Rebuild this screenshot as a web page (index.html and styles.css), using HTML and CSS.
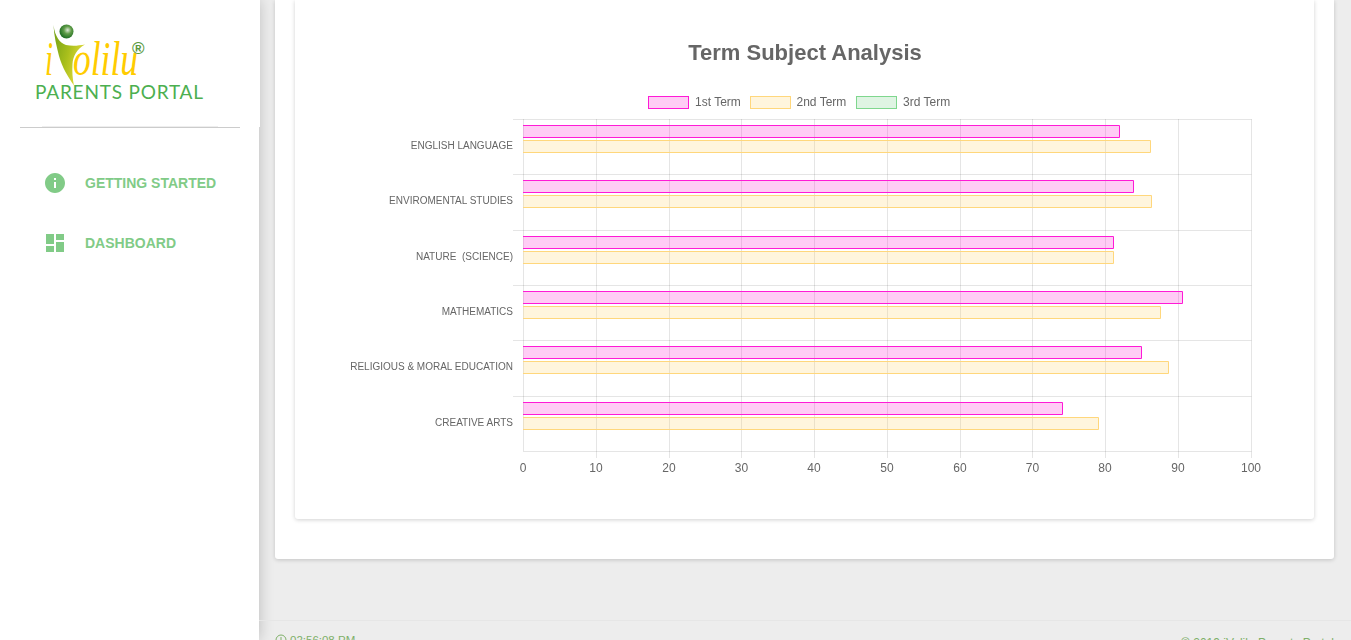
FILE: index.html
```html
<!DOCTYPE html>
<html>
<head>
<meta charset="utf-8">
<title>Parents Portal</title>
<link rel="stylesheet" href="styles.css">
</head>
<body>

<div class="sidebar">
	<div class="logo">
		<svg class="logo-art" viewBox="0 0 260 127" width="260" height="127">
			<defs>
				<radialGradient id="ball" cx="0.58" cy="0.4" r="0.6">
					<stop offset="0" stop-color="#dfe9d8"/>
					<stop offset="0.45" stop-color="#5f9c48"/>
					<stop offset="1" stop-color="#1f6d23"/>
				</radialGradient>
				<linearGradient id="figure" x1="0" y1="0" x2="1" y2="0.5">
					<stop offset="0" stop-color="#6f9e16"/>
					<stop offset="0.55" stop-color="#a9bf1c"/>
					<stop offset="1" stop-color="#e4dc3a"/>
				</linearGradient>
			</defs>
			<circle cx="66.5" cy="31.5" r="7" fill="url(#ball)"/>
			<path d="M53.5 25C55 37 60 43 66 45C73 46.500 79 45.500 85 44.500C77 49 73 56 72.500 64C72 71 72.500 79 74 85.500C68 77 62 67 59 56C56.500 46 54 36 53.500 25Z" fill="url(#figure)"/>
			<text class="logo-word" x="45" y="75" textLength="8" lengthAdjust="spacingAndGlyphs">i</text>
			<text class="logo-word" x="73" y="75" textLength="65" lengthAdjust="spacingAndGlyphs">olilu</text>
			<text class="logo-reg" x="132" y="54">®</text>
			<text class="logo-portal" x="35" y="98.500" textLength="168" lengthAdjust="spacing">PARENTS PORTAL</text>
		</svg>
	</div>
	<div class="nav">
		<a class="nav-item">
			<svg viewBox="0 0 24 24" width="24" height="24"><path d="M12 2C6.480 2 2 6.480 2 12s4.480 10 10 10 10-4.480 10-10S17.520 2 12 2zm1 15h-2v-6h2v6zm0-8h-2V7h2v2z"/></svg>
			<span>GETTING STARTED</span>
		</a>
		<a class="nav-item">
			<svg viewBox="0 0 24 24" width="24" height="24"><path d="M3 13h8V3H3v10zm0 8h8v-6H3v6zm10 0h8V11h-8v10zm0-18v6h8V3h-8z"/></svg>
			<span>DASHBOARD</span>
		</a>
	</div>
</div>

<div class="main">
	<div class="panel">
		<div class="chart-card">
			<svg class="chart" viewBox="295 0 1019 519" width="1019" height="519">
				<text class="chart-title" x="805" y="60">Term Subject Analysis</text>

				<rect class="term1" x="648.500" y="96.500" width="40" height="12"/>
				<text class="legend" x="695" y="106">1st Term</text>
				<rect class="term2" x="750.500" y="96.500" width="40" height="12"/>
				<text class="legend" x="796.500" y="106">2nd Term</text>
				<rect class="term3" x="856.500" y="96.500" width="40" height="12"/>
				<text class="legend" x="903" y="106">3rd Term</text>

				<path class="grid" d="M513 119.500H1251.500M513 174.500H1251.500M513 230.500H1251.500M513 285.500H1251.500M513 340.500H1251.500M513 396.500H1251.500M523 451.500H1251.500"/>
				<path class="grid" d="M523.500 119V451M596.500 119V458M669.500 119V458M741.500 119V458M814.500 119V458M887.500 119V458M960.500 119V458M1032.500 119V458M1105.500 119V458M1178.500 119V458M1251.500 119V458"/>

				<path class="term1" d="M523 125.500H1119.500V137.500H523"/>
				<path class="term2" d="M523 140.500H1150.500V152.500H523"/>
				<path class="term1" d="M523 180.500H1133.500V192.500H523"/>
				<path class="term2" d="M523 195.500H1151.500V207.500H523"/>
				<path class="term1" d="M523 236.500H1113.500V248.500H523"/>
				<path class="term2" d="M523 251.500H1113.500V263.500H523"/>
				<path class="term1" d="M523 291.500H1182.500V303.500H523"/>
				<path class="term2" d="M523 306.500H1160.500V318.500H523"/>
				<path class="term1" d="M523 346.500H1141.500V358.500H523"/>
				<path class="term2" d="M523 361.500H1168.500V373.500H523"/>
				<path class="term1" d="M523 402.500H1062.500V414.500H523"/>
				<path class="term2" d="M523 417.500H1098.500V429.500H523"/>

				<text class="subject" x="513" y="149">ENGLISH LANGUAGE</text>
				<text class="subject" x="513" y="204">ENVIROMENTAL STUDIES</text>
				<text class="subject" x="513" y="260" xml:space="preserve">NATURE  (SCIENCE)</text>
				<text class="subject" x="513" y="315">MATHEMATICS</text>
				<text class="subject" x="513" y="370">RELIGIOUS &amp; MORAL EDUCATION</text>
				<text class="subject" x="513" y="426">CREATIVE ARTS</text>

				<text class="tick" x="523" y="472">0</text>
				<text class="tick" x="596" y="472">10</text>
				<text class="tick" x="669" y="472">20</text>
				<text class="tick" x="741.500" y="472">30</text>
				<text class="tick" x="814" y="472">40</text>
				<text class="tick" x="887" y="472">50</text>
				<text class="tick" x="960" y="472">60</text>
				<text class="tick" x="1032.500" y="472">70</text>
				<text class="tick" x="1105" y="472">80</text>
				<text class="tick" x="1178" y="472">90</text>
				<text class="tick" x="1251" y="472">100</text>
			</svg>
		</div>
	</div>

	<div class="footer">
		<div class="clock">
			<svg viewBox="0 0 12 12" width="12" height="12"><circle cx="6" cy="6" r="5"/><path d="M6 3V6.500"/></svg>
			<span>02:56:08 PM</span>
		</div>
		<div class="copyright">© 2019 iVolilu Parents Portal</div>
	</div>
</div>

</body>
</html>
```
FILE: styles.css
```css
html, body {
	height: 640px;
	margin: 0;
	overflow: hidden;
}

body {
	display: flex;
	background-color: #ededed;
	font-family: "Liberation Sans", Arial, sans-serif;
}

.sidebar {
	flex: 0 0 259px;
	min-width: 0;
	background-color: #fff;
	box-shadow: 0 0 14px rgba(0, 0, 0, 0.22);
}

.logo {
	position: relative;
	width: 260px;
	height: 127px;
	background-color: #fff;
}
.logo::before {
	content: "";
	position: absolute;
	left: 42px;
	right: 42px;
	bottom: 0;
	height: 1px;
	background-color: #eee;
}
.logo::after {
	content: "";
	position: absolute;
	left: 20px;
	right: 20px;
	bottom: -1px;
	height: 1px;
	background-color: #ccc;
}
.logo-art {
	display: block;
}
.logo-word {
	font: italic 48px "Liberation Serif", serif;
	fill: #ffcc00;
}
.logo-reg {
	font: bold 17px "Liberation Sans", sans-serif;
	fill: #5a9a3f;
}
.logo-portal {
	font: 19px Lato, sans-serif;
	fill: #4caf50;
}

.nav {
	padding-top: 26px;
}
.nav-item {
	display: flex;
	align-items: center;
	gap: 18px;
	height: 60px;
	padding-left: 43px;
	color: #81cb87;
	font-size: 14px;
	font-weight: bold;
}
.nav-item svg {
	fill: #81cb87;
}

.main {
	flex: 1;
	padding: 0 17px 0 16px;
	display: flex;
	flex-direction: column;
	min-width: 0;
}

.panel {
	height: 519px;
	padding: 0 20px 40px;
	background-color: #fff;
	border-radius: 0 0 3px 3px;
	box-shadow: 0 1px 4px rgba(0, 0, 0, 0.18);
}

.chart-card {
	height: 519px;
	background-color: #fff;
	border-radius: 0 0 3px 3px;
	box-shadow: 0 1px 4px rgba(0, 0, 0, 0.18);
}
.chart {
	display: block;
	will-change: transform;
}
.chart-title {
	font: bold 22px "Liberation Sans", sans-serif;
	fill: #666;
	text-anchor: middle;
}
.legend {
	font: 12px "Liberation Sans", sans-serif;
	fill: #666;
}
.subject {
	font: 10px "Liberation Sans", sans-serif;
	fill: #666;
	text-anchor: end;
	white-space: pre;
}
.tick {
	font: 12px "Liberation Sans", sans-serif;
	fill: #666;
	text-anchor: middle;
}
.grid {
	fill: none;
	stroke: rgba(0, 0, 0, 0.1);
}
.term1 {
	fill: rgba(255, 0, 204, 0.2);
	stroke: #ff1ad6;
}
.term2 {
	fill: rgba(255, 206, 86, 0.2);
	stroke: #ffd77c;
}
.term3 {
	fill: rgba(75, 192, 100, 0.18);
	stroke: #7fd78e;
}

.footer {
	display: flex;
	justify-content: space-between;
	margin-top: 61px;
	margin-left: -16px;
	margin-right: -17px;
	padding: 13px 17px 0 16px;
	border-top: 1px solid #e6e6e6;
	font-size: 12px;
	color: #7fb069;
}
.clock {
	display: flex;
	align-items: center;
	align-self: flex-start;
	gap: 3px;
	font-size: 11.5px;
}
.clock svg {
	fill: none;
	stroke: #7fb069;
}
.copyright {
	margin-top: 2px;
}
```
